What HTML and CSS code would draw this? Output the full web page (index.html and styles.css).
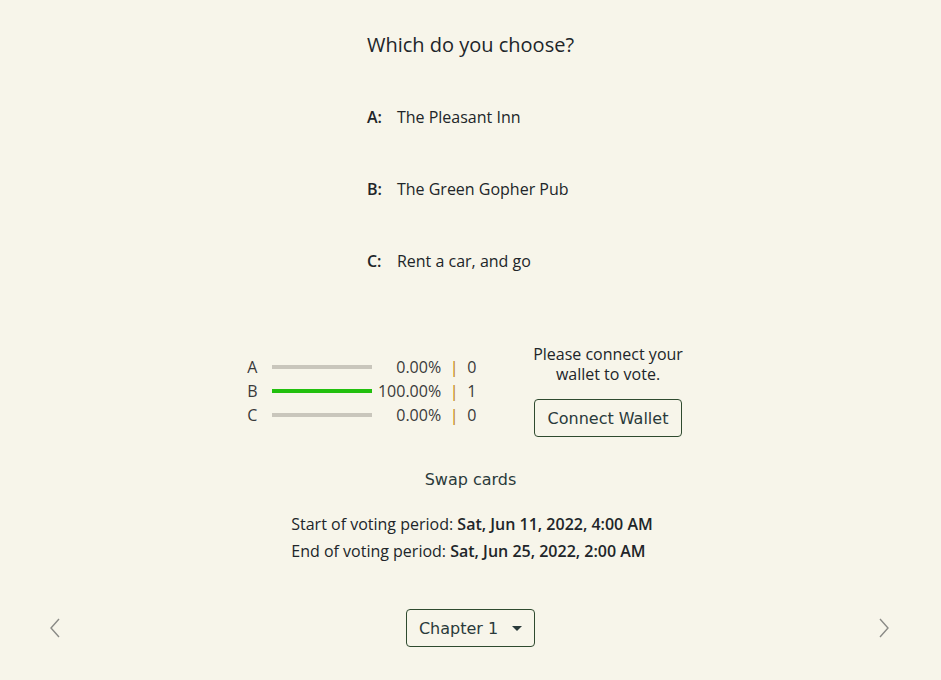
FILE: index.html
```html
<!DOCTYPE html>
<html>
<head>
<meta charset="utf-8">
<link rel="stylesheet" href="styles.css">
</head>
<body>
<main class="page">
  <section class="question">
    <h1 class="q-title">Which do you choose?</h1>
    <div class="option"><span class="opt-key">A:</span><span class="opt-text">The Pleasant Inn</span></div>
    <div class="option"><span class="opt-key">B:</span><span class="opt-text">The Green Gopher Pub</span></div>
    <div class="option"><span class="opt-key">C:</span><span class="opt-text">Rent a car, and go</span></div>
  </section>

  <section class="results">
    <div class="tally">
      <div class="row"><span class="letter">A</span><span class="bar"><span class="fill" style="width:0%"></span></span><span class="pct">0.00%</span><span class="pipe">|</span><span class="count">0</span></div>
      <div class="row"><span class="letter">B</span><span class="bar"><span class="fill" style="width:100%"></span></span><span class="pct">100.00%</span><span class="pipe">|</span><span class="count">1</span></div>
      <div class="row"><span class="letter">C</span><span class="bar"><span class="fill" style="width:0%"></span></span><span class="pct">0.00%</span><span class="pipe">|</span><span class="count">0</span></div>
    </div>
    <div class="wallet">
      <p class="wallet-msg">Please connect your<br>wallet to vote.</p>
      <button class="btn">Connect Wallet</button>
    </div>
  </section>

  <div class="swap">Swap cards</div>

  <div class="period">
    <div>Start of voting period: <b>Sat, Jun 11, 2022, 4:00 AM</b></div>
    <div>End of voting period: <b>Sat, Jun 25, 2022, 2:00 AM</b></div>
  </div>

  <nav class="pager">
    <svg class="arrow" width="14" height="22" viewBox="0 0 14 22"><path d="M11 2 L3 11 L11 20" fill="none" stroke="#8a8a86" stroke-width="1.4"/></svg>
    <button class="btn chapter">Chapter 1 <span class="caret"></span></button>
    <svg class="arrow" width="14" height="22" viewBox="0 0 14 22"><path d="M3 2 L11 11 L3 20" fill="none" stroke="#8a8a86" stroke-width="1.4"/></svg>
  </nav>
</main>
</body>
</html>
```

FILE: styles.css
```css
html, body {
  margin: 0;
  padding: 0;
  background: #f7f5ea;
}
body {
  font-family: "Open Sans", "Noto Sans", sans-serif;
  color: #212529;
  font-size: 16px;
}
.page {
  width: 941px;
  height: 680px;
  display: flex;
  flex-direction: column;
  align-items: center;
}
.question {
  display: flex;
  flex-direction: column;
  align-items: flex-start;
  padding-top: 31px;
}
.q-title {
  margin: 0;
  font-size: 20px;
  font-weight: 400;
  line-height: 28px;
}
.option {
  margin-top: 44px;
  line-height: 28px;
}
.opt-key {
  font-weight: 600;
  display: inline-block;
  width: 30px;
}
.results {
  display: flex;
  align-items: flex-start;
  gap: 56px;
  margin-top: 66px;
  margin-left: -11px;
}
.tally {
  display: flex;
  flex-direction: column;
  padding-top: 14px;
}
.row {
  display: flex;
  align-items: center;
  height: 24px;
  font-weight: 400;
  color: #3a3a3a;
}
.letter {
  width: 25px;
}
.bar {
  width: 100px;
  height: 4px;
  background: #c9c6bc;
  display: block;
}
.fill {
  display: block;
  height: 4px;
  background: #22c00e;
}
.pct {
  width: 69px;
  text-align: right;
}
.pipe {
  color: #c07d05;
  width: 26px;
  text-align: center;
}
.count {
  width: 10px;
}
.wallet {
  display: flex;
  flex-direction: column;
  align-items: center;
}
.wallet-msg {
  margin: 0;
  text-align: center;
  line-height: 20px;
  font-size: 16px;
  padding-top: 3px;
}
.btn {
  font-family: "DejaVu Sans", "Noto Sans", sans-serif;
  font-size: 16px;
  color: #2a3a3a;
  background: transparent;
  border: 1px solid #2f4a2f;
  border-radius: 4px;
  height: 38px;
  padding: 0 13px;
  margin-top: 15px;
}
.swap {
  font-family: "DejaVu Sans", "Noto Sans", sans-serif;
  font-size: 16px;
  color: #2a3a3a;
  margin-top: 33px;
  line-height: 20px;
}
.period {
  margin-top: 21px;
  line-height: 27px;
  margin-left: 3px;
}
.period b {
  font-weight: 600;
}
.pager {
  align-self: stretch;
  display: flex;
  align-items: center;
  justify-content: space-between;
  padding: 0 50px 0 48px;
  margin-top: 44px;
}
.chapter {
  margin-top: 0;
  display: flex;
  align-items: center;
  gap: 14px;
  padding: 0 12px;
  margin-left: 2px;
}
.caret {
  width: 0;
  height: 0;
  border-left: 5px solid transparent;
  border-right: 5px solid transparent;
  border-top: 5px solid #2a3a3a;
}
```
